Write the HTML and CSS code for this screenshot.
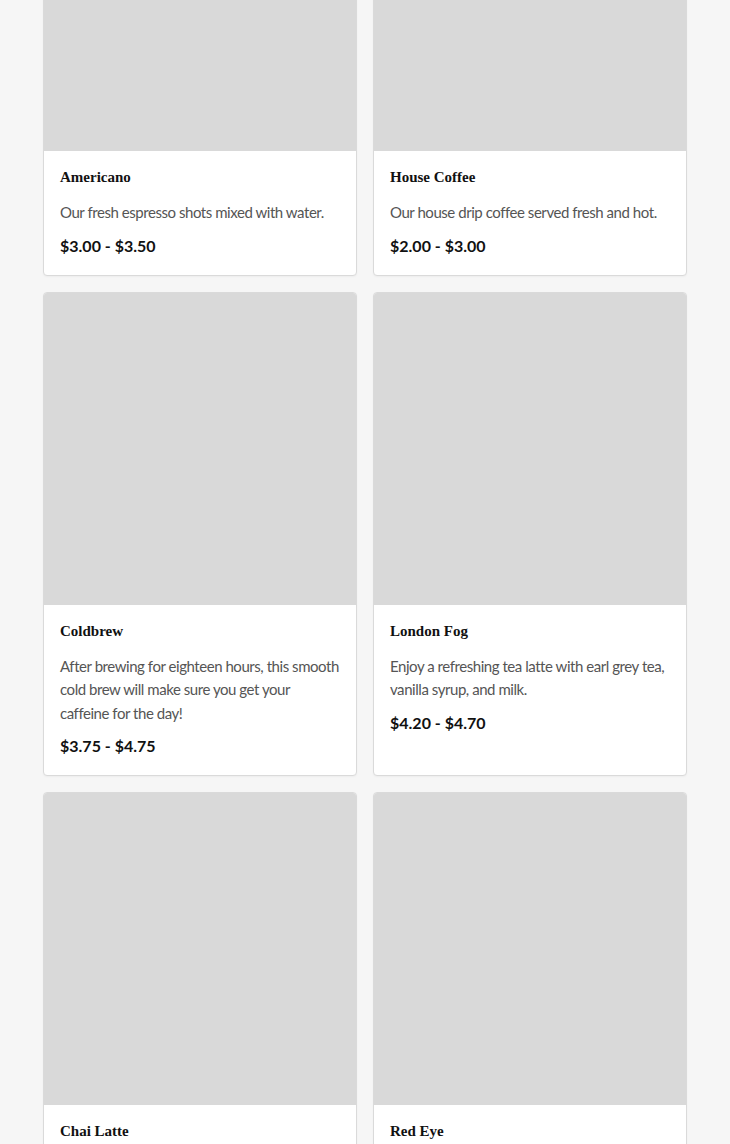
FILE: index.html
```html
<!DOCTYPE html>
<html>
<head>
    <title>Menu</title>
    <link rel="stylesheet" href="styles.css">
</head>
<body>
    <div class="menu-grid">
        <div class="card">
            <div class="card-image"></div>
            <div class="card-body">
                <h3 class="card-title">Americano</h3>
                <p class="card-text">Our fresh espresso shots mixed with water.</p>
                <p class="card-price">$3.00 - $3.50</p>
            </div>
        </div>

        <div class="card">
            <div class="card-image"></div>
            <div class="card-body">
                <h3 class="card-title">House Coffee</h3>
                <p class="card-text">Our house drip coffee served fresh and hot.</p>
                <p class="card-price">$2.00 - $3.00</p>
            </div>
        </div>

        <div class="card">
            <div class="card-image"></div>
            <div class="card-body">
                <h3 class="card-title">Coldbrew</h3>
                <p class="card-text">After brewing for eighteen hours, this smooth cold brew will make sure you get your caffeine for the day!</p>
                <p class="card-price">$3.75 - $4.75</p>
            </div>
        </div>

        <div class="card">
            <div class="card-image"></div>
            <div class="card-body">
                <h3 class="card-title">London Fog</h3>
                <p class="card-text">Enjoy a refreshing tea latte with earl grey tea, vanilla syrup, and milk.</p>
                <p class="card-price">$4.20 - $4.70</p>
            </div>
        </div>

        <div class="card">
            <div class="card-image"></div>
            <div class="card-body">
                <h3 class="card-title">Chai Latte</h3>
                <p class="card-text">Spiced black tea steamed with milk and a touch of honey.</p>
                <p class="card-price">$4.00 - $4.50</p>
            </div>
        </div>

        <div class="card">
            <div class="card-image"></div>
            <div class="card-body">
                <h3 class="card-title">Red Eye</h3>
                <p class="card-text">Our house drip coffee with a shot of espresso.</p>
                <p class="card-price">$3.50 - $4.00</p>
            </div>
        </div>
    </div>
</body>
</html>
```

FILE: styles.css
```css
body {
    font-family: Lato, "Liberation Sans", sans-serif;
    margin: 0;
    padding: 0;
    background-color: #f6f6f6;
}

/* the page is shown scrolled, so the first row starts above the top */
.menu-grid {
    display: grid;
    grid-template-columns: 1fr 1fr;
    gap: 16px;
    padding: 0 43px 40px;
    margin-top: -162px;
}

.card {
    background-color: #ffffff;
    border: 1px solid #dadada;
    border-radius: 4px;
    overflow: hidden;
    box-shadow: 0 1px 2px rgba(0, 0, 0, 0.04);
}

.card-image {
    aspect-ratio: 1 / 1;
    background-color: #d9d9d9;
}

.card-body {
    padding: 16px 16px 19px;
}

.card-title {
    font-family: "Liberation Serif", "DejaVu Serif", serif;
    font-size: 15px;
    font-weight: bold;
    line-height: 20px;
    color: #111;
    margin: 0;
}

.card-text {
    font-size: 15px;
    letter-spacing: -0.45px;
    line-height: 23.5px;
    color: #555;
    margin: 14px 0 0;
}

.card-price {
    font-size: 16px;
    font-weight: bold;
    line-height: 20px;
    color: #111;
    margin: 11px 0 0;
}
```
